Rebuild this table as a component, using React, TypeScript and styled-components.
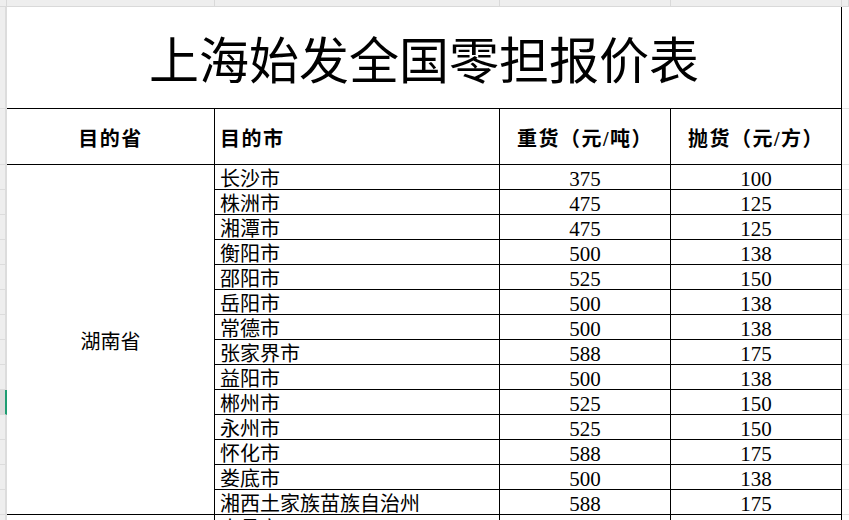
import React from 'react';
import styled, { createGlobalStyle } from 'styled-components';

const GlobalStyle = createGlobalStyle`
  html, body {
    margin: 0;
    padding: 0;
    background: #fff;
    overflow: hidden;
  }
  body {
    font-family: "Liberation Serif", "Noto Sans CJK SC", serif;
    color: #000;
  }
`;

const CJK = `"Liberation Serif", "Noto Sans CJK SC", serif`;

const Sheet = styled.div`
  display: grid;
  grid-template-columns: 7px 208px 285px 171px 171px 1fr;
  grid-template-rows: 7px 102px 56px repeat(15, 25px);
  width: 849px;
  height: 520px;
  overflow: hidden;
`;

const ColHead = styled.div`
  background: #eeeeee;
  border-bottom: 1px solid #d9d9d9;
  border-right: 1px solid #d9d9d9;
  box-sizing: border-box;
`;

const RowHead = styled.div<{ $active?: boolean }>`
  background: ${(p) => (p.$active ? '#dadada' : '#eeeeee')};
  border-bottom: 1px solid ${(p) => (p.$active ? '#dadada' : '#dcdcdc')};
  border-right: 2px solid ${(p) => (p.$active ? '#1f9d72' : '#dcdcdc')};
  box-sizing: border-box;
`;

const Cell = styled.div<{
  $align?: 'left' | 'center';
  $num?: boolean;
}>`
  box-sizing: border-box;
  display: flex;
  align-items: center;
  justify-content: ${(p) => (p.$align === 'left' ? 'flex-start' : 'center')};
  padding: ${(p) => (p.$align === 'left' ? '4px 0 0 5px' : '4px 0 0 0')};
  border-right: 1px solid #000;
  border-bottom: 1px solid #000;
  font-family: ${CJK};
  font-size: ${(p) => (p.$num ? '21px' : '20px')};
  line-height: 1;
  white-space: nowrap;
  overflow: hidden;
`;

const TitleCell = styled(Cell)`
  grid-column: 2 / span 4;
  font-size: 50px;
  padding-top: 8px;
`;

const HeadCell = styled(Cell)`
  font-weight: bold;
  font-size: 20px;
  letter-spacing: 1.5px;
`;

const ProvinceCell = styled(Cell)<{ $span: number }>`
  grid-row: span ${(p) => p.$span};
`;

const SpareCell = styled.div`
  box-sizing: border-box;
  border-bottom: 1px solid #e2e2e2;
`;

type Row = { city: string; heavy: number; light: number };

const hunan: Row[] = [
  { city: '长沙市', heavy: 375, light: 100 },
  { city: '株洲市', heavy: 475, light: 125 },
  { city: '湘潭市', heavy: 475, light: 125 },
  { city: '衡阳市', heavy: 500, light: 138 },
  { city: '邵阳市', heavy: 525, light: 150 },
  { city: '岳阳市', heavy: 500, light: 138 },
  { city: '常德市', heavy: 500, light: 138 },
  { city: '张家界市', heavy: 588, light: 175 },
  { city: '益阳市', heavy: 500, light: 138 },
  { city: '郴州市', heavy: 525, light: 150 },
  { city: '永州市', heavy: 525, light: 150 },
  { city: '怀化市', heavy: 588, light: 175 },
  { city: '娄底市', heavy: 500, light: 138 },
  { city: '湘西土家族苗族自治州', heavy: 588, light: 175 },
];

const ACTIVE_ROW = 9;

const App = () => {
  return (
    <>
      <GlobalStyle />
      <Sheet>
        <ColHead />
        <ColHead />
        <ColHead />
        <ColHead />
        <ColHead />
        <ColHead />

        <RowHead />
        <TitleCell>上海始发全国零担报价表</TitleCell>
        <SpareCell />

        <RowHead />
        <HeadCell>目的省</HeadCell>
        <HeadCell $align="left">目的市</HeadCell>
        <HeadCell>重货（元/吨）</HeadCell>
        <HeadCell>抛货（元/方）</HeadCell>
        <SpareCell />

        {hunan.map((r, i) => (
          <React.Fragment key={r.city}>
            <RowHead $active={i === ACTIVE_ROW} />
            {i === 0 && <ProvinceCell $span={hunan.length}>湖南省</ProvinceCell>}
            <Cell $align="left">{r.city}</Cell>
            <Cell $num>{r.heavy}</Cell>
            <Cell $num>{r.light}</Cell>
            <SpareCell />
          </React.Fragment>
        ))}

        <RowHead />
        <Cell />
        <Cell $align="left">南昌市</Cell>
        <Cell $num>475</Cell>
        <Cell $num>125</Cell>
        <SpareCell />
      </Sheet>
    </>
  );
};

export default App;
